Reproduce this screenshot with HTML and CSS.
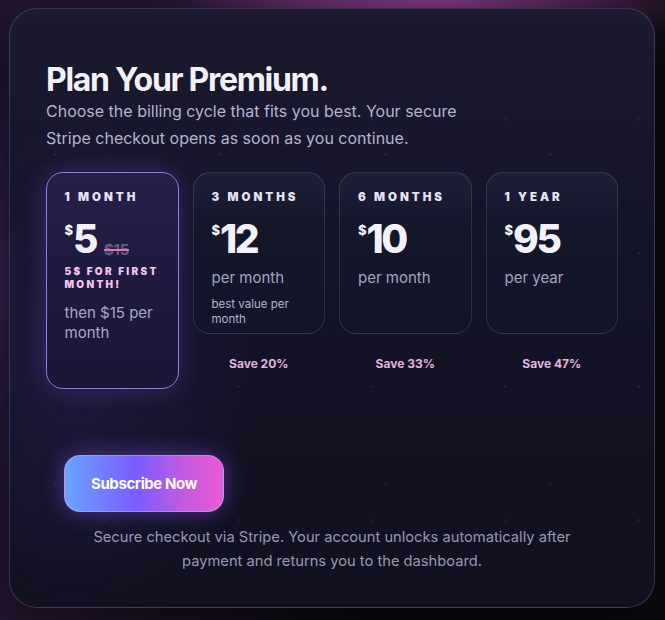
FILE: index.html
```html
<!DOCTYPE html>
<html lang="en">
<head>
<meta charset="utf-8">
<title>Plan Your Premium</title>
<link rel="stylesheet" href="styles.css">
</head>
<body>
<div class="page">
  <main class="panel">
    <h1 class="title">Plan Your Premium.</h1>
    <p class="subtitle">Choose the billing cycle that fits you best. Your secure Stripe checkout opens as soon as you continue.</p>

    <div class="plans">
      <div class="plan-col">
        <div class="plan plan-active">
          <div class="plan-label">1 MONTH</div>
          <div class="price"><span class="cur">$</span><span class="amount">5</span><span class="old">$15</span></div>
          <div class="promo">5$ FOR FIRST MONTH!</div>
          <div class="then">then $15 per month</div>
        </div>
      </div>
      <div class="plan-col">
        <div class="plan">
          <div class="plan-label">3 MONTHS</div>
          <div class="price"><span class="cur">$</span><span class="amount">12</span></div>
          <div class="per">per month</div>
          <div class="note">best value per month</div>
        </div>
        <div class="save">Save 20%</div>
      </div>
      <div class="plan-col">
        <div class="plan">
          <div class="plan-label">6 MONTHS</div>
          <div class="price"><span class="cur">$</span><span class="amount">10</span></div>
          <div class="per">per month</div>
        </div>
        <div class="save">Save 33%</div>
      </div>
      <div class="plan-col">
        <div class="plan">
          <div class="plan-label">1 YEAR</div>
          <div class="price"><span class="cur">$</span><span class="amount">95</span></div>
          <div class="per">per year</div>
        </div>
        <div class="save">Save 47%</div>
      </div>
    </div>

    <div class="actions">
      <button class="subscribe" type="button">Subscribe Now</button>
    </div>
    <p class="footnote">Secure checkout via Stripe. Your account unlocks automatically after payment and returns you to the dashboard.</p>
  </main>
</div>
</body>
</html>
```
FILE: styles.css
```css
* { box-sizing: border-box; }

html, body {
  margin: 0;
  height: 100%;
}

body {
  font-family: Inter, "Noto Sans", "Liberation Sans", sans-serif;
  color: #f2f2fa;
  background:
    radial-gradient(ellipse 260px 60px at 66% 0%, rgba(200, 80, 190, 0.55), transparent 100%),
    radial-gradient(ellipse 420px 120px at 50% 0%, rgba(120, 60, 140, 0.45), transparent 100%),
    radial-gradient(ellipse 160px 420px at 0% 45%, rgba(80, 50, 120, 0.55), transparent 100%),
    radial-gradient(ellipse 300px 200px at 10% 100%, rgba(60, 30, 70, 0.5), transparent 100%),
    #0a0a10;
  overflow: hidden;
}

.page {
  width: 665px;
  height: 620px;
  padding: 8px 10px 12px 9px;
}

.panel {
  width: 646px;
  height: 600px;
  border: 1px solid rgba(150, 150, 200, 0.28);
  border-radius: 28px;
  padding: 53px 36px 34px 36px;
  background:
    radial-gradient(circle, rgba(255, 255, 255, 0.07) 1px, transparent 1.6px) 28px 44px / 133.5px 133.5px,
    radial-gradient(circle, rgba(255, 255, 255, 0.05) 1px, transparent 1.6px) 128px 63px / 165px 165px,
    radial-gradient(ellipse 180px 260px at 10% 62%, rgba(90, 60, 170, 0.16), transparent 100%),
    linear-gradient(180deg, #1b1a2e 0%, #141428 40%, #10101f 100%);
  box-shadow: 0 10px 40px rgba(0, 0, 0, 0.5);
}

.title {
  margin: 0;
  font-size: 32px;
  line-height: 36px;
  font-weight: 700;
  letter-spacing: -1.3px;
  color: #f1f0fb;
}

.subtitle {
  margin: 0;
  max-width: 420px;
  font-size: 16px;
  line-height: 27px;
  color: #b4b4cc;
}

.plans {
  margin-top: 20px;
  display: grid;
  grid-template-columns: repeat(4, 1fr);
  gap: 14px;
}

.plan-col {
  display: flex;
  flex-direction: column;
}

.plan {
  height: 162px;
  border-radius: 17px;
  padding: 17px 18px 8px;
  border: 1px solid rgba(255, 255, 255, 0.12);
  background: linear-gradient(180deg, #1d1f36 0%, #141629 35%, #121427 100%);
}

.plan-active {
  flex: 1;
  height: auto;
  border: 1.5px solid #8c7bea;
  background: linear-gradient(180deg, #272049 0%, #1f1a40 40%, #1b1736 100%);
  box-shadow: 0 0 26px rgba(120, 90, 240, 0.28);
  padding: 16.5px 17.5px 10px;
}

.plan-label {
  font-size: 11.5px;
  line-height: 14px;
  font-weight: 900;
  letter-spacing: 3px;
  color: #e4e4f2;
}

.price {
  margin-top: 16px;
  display: flex;
  align-items: flex-start;
  height: 40px;
}

.cur {
  font-size: 13px;
  line-height: 13px;
  font-weight: 800;
  margin-top: 4px;
  color: #f4f4fc;
}

.amount {
  font-size: 39px;
  line-height: 38px;
  font-weight: 800;
  letter-spacing: -2.5px;
  color: #f2f1fc;
}

.old {
  align-self: flex-end;
  margin-left: 8px;
  margin-bottom: 3px;
  font-size: 15px;
  line-height: 14px;
  font-weight: 700;
  letter-spacing: -0.3px;
  color: #615f7e;
  text-decoration: line-through;
  text-decoration-color: #ee6fb2;
  text-decoration-thickness: 2px;
}

.promo {
  margin-top: 5px;
  font-size: 10px;
  line-height: 13px;
  font-weight: 900;
  letter-spacing: 2.3px;
  color: #f6c4ec;
}

.then {
  margin-top: 12px;
  font-size: 15px;
  line-height: 20px;
  color: #a9a8c2;
}

.per {
  margin-top: 8px;
  font-size: 15px;
  line-height: 20px;
  color: #a3a5bd;
}

.note {
  margin-top: 9px;
  font-size: 11.5px;
  line-height: 15px;
  color: #b6b6cc;
}

.save {
  padding: 22px 0 17px;
  font-size: 12px;
  line-height: 16px;
  font-weight: 700;
  text-align: center;
  color: #e2b6dc;
}

.actions {
  margin-top: 66px;
  padding-left: 18px;
}

.subscribe {
  display: block;
  width: 160px;
  height: 57px;
  border-radius: 16px;
  border: 1px solid rgba(190, 170, 255, 0.55);
  background: linear-gradient(90deg, #6aa3ff 0%, #7a5cff 45%, #c15ade 75%, #ea5ad6 100%);
  box-shadow: 0 0 22px rgba(140, 90, 255, 0.45);
  font-family: Inter, "Noto Sans", sans-serif;
  font-size: 15px;
  font-weight: 700;
  letter-spacing: -0.4px;
  color: #ffffff;
  cursor: pointer;
}

.footnote {
  margin: 13px auto 0;
  max-width: 500px;
  text-align: center;
  font-size: 14.7px;
  line-height: 24px;
  color: #9897b2;
}
```
